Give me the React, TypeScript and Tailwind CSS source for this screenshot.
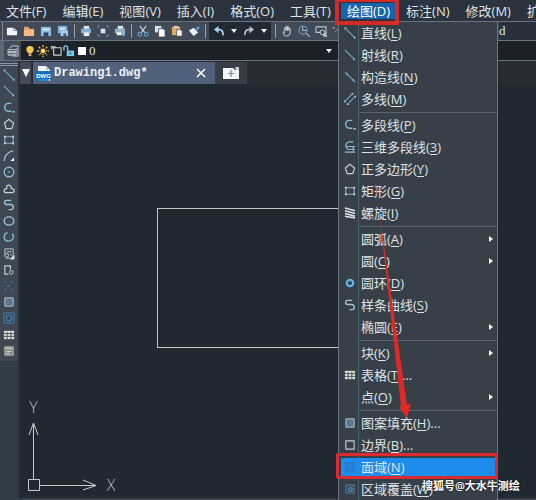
import type { ReactNode } from "react";

const MENUS: [string, string][] = [
  ["文件", "F"], ["编辑", "E"], ["视图", "V"], ["插入", "I"], ["格式", "O"],
  ["工具", "T"], ["绘图", "D"], ["标注", "N"], ["修改", "M"], ["扩展", "X"],
];

const line = "#78acc8";
const pale = "#c3d3da";

const shapes: Record<string, ReactNode> = {
  line: <path d="M2 2l9 9M1 1h1v1H1zM11 11h1v1h-1z" stroke={line} strokeWidth="1.2" />,
  ray: <path d="M1 1l10 10M10.500 10.500h1v1h-1z" stroke={line} strokeWidth="1.2" />,
  xline: <path d="M1 1l11 11M3 3h1v1H3zM9 9h1v1H9z" stroke={line} strokeWidth="1.1" />,
  mline: (
    <>
      <path d="M2 8l6-6M5 11l6-6" stroke={line} strokeWidth="1.1" />
      <path d="M0 8h2v2H0zM8 0h2v2H8zM3 11h2v2H3zM11 3h2v2h-2z" fill="#a5cbdd" />
    </>
  ),
  pline: <path d="M9 1.500H6C.500 1.500.500 10 6 10h3M10 10.500h3" stroke="#86bdd0" strokeWidth="1.5" />,
  poly3: <path d="M10 1H5C1 2 1 7 4 8M3 6h9M3 9h9M1 12h11M10 6v5" stroke="#86bdd0" strokeWidth="1.2" />,
  polygon: <path d="M6.500 1.500l5 4-2 6h-6l-2-6z" stroke={pale} strokeWidth="1.3" />,
  rect: (
    <>
      <path d="M2 3h9v7H2z" stroke="#9dbdc8" />
      <path d="M1 2h2v2H1zM10 2h2v2h-2zM1 9h2v2H1zM10 9h2v2h-2z" fill={pale} />
    </>
  ),
  helix: <path d="M1 1l11 3M1 4l11 3M1 7l11 3M1 10l11 2" stroke="#dce4e8" strokeWidth="1.7" />,
  donut: <circle cx="6.500" cy="6.500" r="3.500" stroke="#5eb7df" strokeWidth="2.400" />,
  spline: <path d="M9 1.500H4C1 1.500 1 6 4 6h4c4 0 4 5.500 1 5.500H6" stroke="#9cc7d5" strokeWidth="1.5" />,
  table: (
    <>
      <path d="M1 2h11v9H1z" fill="#dce3d8" />
      <path d="M1 5h11M1 8h11M4.500 3v8M8.500 3v8" stroke="#46534f" />
    </>
  ),
  hatch: (
    <>
      <path d="M2 2h9v9H2z" fill="#53718d" stroke="#bcc9d2" />
      <path d="M3 6l3-3M3 10l7-7M7 10l3-3" stroke="#7f9bb3" strokeWidth=".7" />
    </>
  ),
  boundary: <path d="M2 2h9v9H2z" stroke="#c5cdd2" strokeWidth="1.2" />,
  region: <path d="M2 2h9v9H2z" fill="#2484dc" stroke="#2a72b8" />,
  wipeout: (
    <>
      <path d="M2 2h9v9H2z" fill="#31506e" stroke="#7b95ab" strokeDasharray="2 1" />
      <circle cx="7" cy="7" r="2" stroke="#6ea0cc" />
    </>
  ),
  arc: (
    <>
      <path d="M1 12C2 6 5 2 11 1" stroke="#9dbdc8" strokeWidth="1.4" />
      <path d="M12 8v4H8z" fill="#fff" />
    </>
  ),
  circle: (
    <>
      <circle cx="6.500" cy="6.500" r="5.200" stroke="#8fb8cb" strokeWidth="1.500" />
      <circle cx="6.500" cy="6.500" r="1.200" fill="#5fa6cf" />
    </>
  ),
  cloud: <path d="M3 10.500C0 10 1 6 4 6 3 1 9 1 9 6c4 0 4 4 1 4.500z" stroke={pale} strokeWidth="1.4" />,
  ellipse: <ellipse cx="6.500" cy="6.500" rx="5.200" ry="4.500" stroke="#9cc7d5" strokeWidth="1.500" />,
  earc: <path d="M10 3c3 4 0 8-4 8C0 11 0 3 5 2" stroke="#79b3c2" strokeWidth="1.6" />,
  insert: (
    <>
      <path d="M2 7V1h9v7M4 4h5M8 11H3" stroke={pale} />
      <circle cx="4" cy="8" r="2" stroke={pale} />
      <path d="M12 8v4H8zM7 6l3 3" fill="#fff" stroke={pale} />
    </>
  ),
  block: (
    <>
      <path d="M6 11H2V2h6v4" stroke={pale} strokeWidth="1.2" />
      <circle cx="9" cy="9" r="2" stroke={pale} />
    </>
  ),
  point: <path d="M2 2h1v1H2zM9 2h1v1H9zM5 6h2v1H5zM2 10h1v1H2zM9 10h1v1H9z" stroke="#3d78a9" />,
  bregion: (
    <>
      <path d="M1 1h11v11H1z" stroke="#4185bd" />
      <circle cx="6.500" cy="6.500" r="3" stroke="#4185bd" strokeWidth="1.300" />
    </>
  ),
  mtext: (
    <>
      <path d="M2 2h9v9H2z" fill="#7e8a7f" stroke="#bdc7c0" />
      <path d="M3 4h7M4 7h5M4 9h3" stroke="#d5dcd4" />
    </>
  ),
  newdoc: (
    <>
      <path d="M1 3h7l4 3v5H1z" fill="#f3f6f6" />
      <path d="M8 3v3h4" stroke="#8796a0" />
    </>
  ),
  open: (
    <>
      <path d="M1 2h5l1 2h5v8H1z" fill="#e0a468" />
      <path d="M1 5h11v7H1z" fill="#f0bd84" />
    </>
  ),
  save: (
    <>
      <path d="M1 2h11v10H1z" fill="#8fb9df" />
      <path d="M4 8h5v4H4z" fill="#33475c" />
      <path d="M3 4h7v2H3z" fill="#d5e6f3" />
    </>
  ),
  saveas: (
    <>
      <path d="M1 1h10v8H1z" fill="#7faede" />
      <path d="M3 3h6v2H3z" fill="#e7f1f8" />
      <path d="M4 6h8v6H4z" fill="#a2cdeb" />
      <path d="M7 9h3v3H7z" fill="#406282" />
    </>
  ),
  print: (
    <>
      <path d="M4 1h6v4H4z" fill="#dbe9f1" />
      <path d="M1 4h11v5H1z" fill="#83b2d0" />
      <path d="M4 8h6v4H4z" fill="#e5eff4" />
    </>
  ),
  preview: (
    <>
      <path d="M1 3V1h2M10 1h2v2M1 10v2h2M10 12h2v-2" stroke="#8192a1" />
      <path d="M4 4h5v5H4z" fill="#dbe6ec" />
    </>
  ),
  publish: (
    <>
      <path d="M4 1h6v4H4z" fill="#dbe9f1" />
      <path d="M1 4h11v5H1z" fill="#8fb0c5" />
      <path d="M3 8h5v3H3z" fill="#fff" />
      <circle cx="10" cy="10" r="2" fill="#74b6df" />
    </>
  ),
  cut: (
    <>
      <path d="M3 1l6 8M10 1L4 9" stroke="#c8d4da" strokeWidth="1.2" />
      <circle cx="3" cy="10" r="2" stroke="#5e9dce" strokeWidth="1.3" />
      <circle cx="10" cy="10" r="2" stroke="#5e9dce" strokeWidth="1.3" />
    </>
  ),
  copy: (
    <>
      <path d="M1 1h7v7H1z" fill="#dce2e4" />
      <path d="M5 4h5l2 2v7H5z" fill="#fff" stroke="#4a5663" />
    </>
  ),
  paste: (
    <>
      <path d="M1 2h9v9H1z" fill="#e5a667" />
      <path d="M3 1h5v2H3z" fill="#d7d7cf" />
      <path d="M6 5h4l2 2v5H6z" fill="#fff" stroke="#6c6159" />
    </>
  ),
  match: (
    <>
      <path d="M8 4l3-3 2 2-3 3z" fill="#5a9fd0" />
      <path d="M1 6l5-3 5 5-5 4z" fill="#e9f2f7" />
    </>
  ),
  undo: (
    <>
      <path d="M6 1v8L1 5z" fill="#a9d0ee" />
      <path d="M5 5h2q4 0 4 6" stroke="#a9d0ee" strokeWidth="2" />
    </>
  ),
  redo: (
    <>
      <path d="M7 1v8l5-4z" fill="#b5c2cc" />
      <path d="M8 5H6q-4 0-4 6" stroke="#b5c2cc" strokeWidth="1.800" />
    </>
  ),
  pan: <path d="M4 7V3h1.500v3V1.500H7V6 2h1.500v4V4H10v4q0 4-4 4Q3 12 2 8l1-1 1 2" stroke="#cfd5d9" />,
  zoomrt: (
    <>
      <circle cx="5.500" cy="5.500" r="4.300" stroke="#6797bb" strokeWidth="1.300" />
      <path d="M5 2v4h4M9 9l4 4" stroke="#aebfcb" strokeWidth="1.2" />
    </>
  ),
  zoomwin: (
    <>
      <path d="M1 2h11v6M1 2v6h5" stroke="#b9c3cb" strokeWidth="1.2" />
      <circle cx="8" cy="8" r="2.500" stroke="#cfd8dd" />
      <path d="M10 10l3 3M12 8v4H9z" stroke="#dbe2e6" />
    </>
  ),
  zoomprev: <path d="M1 3h2M5 5h2M3 7h1" stroke="#c9946a" strokeWidth="1.5" />,
  layers: <path d="M3 4l2-3h7v2M1 5h9v2H1zM1 8h9v2H1zM1 11h9M10 4h2v8H6" stroke="#c5cfd5" />,
  bulb: (
    <>
      <path d="M6.500 1C1 1 2 7 5 9h3c4-3 3-8-1.500-8z" fill="#f8c94c" />
      <path d="M5 9h3v3H5z" fill="#d3b36d" />
    </>
  ),
  sun: (
    <>
      <path d="M6.500 0v13M0 6.500h13M2 2l9 9M11 2l-9 9" stroke="#efc449" strokeWidth="1.5" strokeDasharray="2 1" />
      <circle cx="6.500" cy="6.500" r="3" fill="#ffdc5f" stroke="#322f27" />
    </>
  ),
  viewport: <path d="M4 3h8v8H4zM1 2h5M2 1v4" stroke="#cbd1d4" strokeWidth="1.2" />,
  lock: (
    <>
      <path d="M1 6V3q0-2 2-2t2 2v3" stroke="#84cfed" strokeWidth="1.5" />
      <path d="M4 6h8v6H4z" fill="#79c8e8" />
      <path d="M8 8v2" stroke="#225270" strokeWidth="1.5" />
    </>
  ),
};

function Icon({ name }: { name: string }) {
  return (
    <svg viewBox="0 0 13 13" className="size-3 shrink-0" fill="none" aria-hidden="true">
      {shapes[name]}
    </svg>
  );
}

function Tool({ name }: { name: string }) {
  return (
    <button type="button" aria-label={name} className="flex h-4 w-3 shrink-0 items-center justify-center">
      <Icon name={name} />
    </button>
  );
}

const Caret = () => (
  <svg viewBox="0 0 6 4" className="h-1 w-1.5 shrink-0" aria-hidden="true">
    <path d="M0 0h6L3 4z" fill="#f0f3f5" />
  </svg>
);

const Divider = () => <span className="h-3.5 w-px shrink-0 bg-[#98a2aa]" />;

type Entry = { text: string; hot: string; icon?: string; sub?: boolean; dots?: boolean };

const GROUPS: Entry[][] = [
  [
    { text: "直线", hot: "L", icon: "line" },
    { text: "射线", hot: "R", icon: "ray" },
    { text: "构造线", hot: "N", icon: "xline" },
    { text: "多线", hot: "M", icon: "mline" },
  ],
  [
    { text: "多段线", hot: "P", icon: "pline" },
    { text: "三维多段线", hot: "3", icon: "poly3" },
    { text: "正多边形", hot: "Y", icon: "polygon" },
    { text: "矩形", hot: "G", icon: "rect" },
    { text: "螺旋", hot: "I", icon: "helix" },
  ],
  [
    { text: "圆弧", hot: "A", sub: true },
    { text: "圆", hot: "C", sub: true },
    { text: "圆环", hot: "D", icon: "donut" },
    { text: "样条曲线", hot: "S", icon: "spline" },
    { text: "椭圆", hot: "E", sub: true },
  ],
  [
    { text: "块", hot: "K", sub: true },
    { text: "表格", hot: "T", icon: "table", dots: true },
    { text: "点", hot: "O", sub: true },
  ],
  [
    { text: "图案填充", hot: "H", icon: "hatch", dots: true },
    { text: "边界", hot: "B", icon: "boundary", dots: true },
    { text: "面域", hot: "N", icon: "region" },
    { text: "区域覆盖", hot: "W", icon: "wipeout" },
  ],
];

function MenuRow({ item }: { item: Entry }) {
  const active = item.text === "面域";
  return (
    <button type="button" role="menuitem" className="relative flex h-[22px] w-full items-center text-left">
      {active && <span className="absolute inset-x-0.5 inset-y-0.5 bg-[#1e8ced]" />}
      <span className="relative flex w-[22px] shrink-0 justify-center">
        {item.icon && <Icon name={item.icon} />}
      </span>
      <span className="relative flex-1 whitespace-nowrap">
        {item.text}(<span className="underline underline-offset-2">{item.hot}</span>){item.dots && "..."}
      </span>
      {item.sub && (
        <svg viewBox="0 0 4 6" className="mr-1 h-1.5 w-1" aria-hidden="true">
          <path d="M0 0l4 3-4 3z" fill="#fff" />
        </svg>
      )}
    </button>
  );
}

function DrawMenu() {
  return (
    <div
      role="menu"
      aria-label="绘图"
      className="absolute top-[21px] left-[338px] h-[479px] w-[160px] overflow-hidden border-x border-t border-[#69757e] bg-[#374049]"
    >
      <span className="absolute inset-y-0 left-[19px] w-px bg-[#4c6069]" />
      {GROUPS.map((group, i) => (
        <div key={i}>
          {i > 0 && (
            <div className="flex h-1 items-center pl-5">
              <span className="h-px w-full bg-[#59656e]" />
            </div>
          )}
          {group.map((item) => (
            <MenuRow key={item.text} item={item} />
          ))}
        </div>
      ))}
    </div>
  );
}

const SIDE = [
  "line", "ray", "pline", "polygon", "rect", "arc", "circle", "cloud", "spline",
  "ellipse", "earc", "insert", "block", "point", "hatch", "bregion", "table", "mtext",
];

export default function App() {
  return (
    <div className="relative flex h-screen flex-col overflow-hidden bg-[#202932] font-['Open_Sans','Noto_Sans_CJK_SC',sans-serif] text-[13px] leading-[22px] text-[#dfe3e6]">
      <nav className="flex h-[21px] shrink-0 items-center gap-4 overflow-hidden bg-[#2b343e] pl-1.5">
        {MENUS.map(([label, key]) => (
          <button
            key={label}
            type="button"
            className={
              label === "绘图"
                ? "-mx-1.5 h-4 shrink-0 bg-[#1764ad] px-1.5 leading-4 whitespace-nowrap text-white"
                : "h-5 shrink-0 leading-5 whitespace-nowrap"
            }
          >
            {label}({key})
          </button>
        ))}
      </nav>

      <div className="flex h-5 shrink-0 items-center border-y border-[#687580] bg-[#404b57]">
        <span className="mr-[3px] ml-0.5 h-full w-px bg-[#7c8791]" />
        <div className="flex items-center gap-[5px]">
          {["newdoc", "open", "save", "saveas"].map((n) => <Tool key={n} name={n} />)}
          <Divider />
          {["print", "preview", "publish"].map((n) => <Tool key={n} name={n} />)}
          <Divider />
          {["cut", "copy", "paste", "match"].map((n) => <Tool key={n} name={n} />)}
          <Divider />
        </div>
        <div className="ml-[3px] flex h-full w-[62px] items-center justify-between bg-[#202831] px-1">
          <Tool name="undo" /><Caret /><Tool name="redo" /><Caret />
        </div>
        <div className="ml-1 flex items-center gap-[5px]">
          <Divider />
          <Tool name="pan" /><Tool name="zoomrt" /><Tool name="zoomwin" /><Tool name="zoomprev" />
        </div>
        <select
          aria-label="文字样式"
          className="ml-auto h-full w-[37px] appearance-none bg-[#28313b] font-['Liberation_Serif',serif] text-[13px] leading-4"
        >
          <option>d</option>
        </select>
      </div>

      <div className="flex h-5 shrink-0 items-center border-b border-[#687580] bg-[#1c2129]">
        <div className="flex h-full w-[21px] shrink-0 items-center justify-center border-l-4 border-[#5c6873] bg-[#404b57]">
          <Icon name="layers" />
        </div>
        <div className="ml-[3px] flex items-center gap-px">
          <Icon name="bulb" /><Icon name="sun" /><Icon name="viewport" /><Icon name="lock" />
        </div>
        <span className="ml-[3px] size-2 bg-white" />
        <select
          aria-label="图层"
          className="ml-[3px] h-4 w-[237px] appearance-none bg-transparent font-['Liberation_Serif',serif] text-[13px] leading-4"
        >
          <option>0</option>
        </select>
        <Caret />
      </div>

      <div className="flex min-h-0 flex-1">
        <aside className="flex w-5 shrink-0 flex-col border-r-2 border-[#28313b] bg-[#333d47]">
          <div className="flex h-[300px] flex-col items-center bg-[#3e4853] pb-0.5">
            <span className="mt-0.5 mb-px h-[3px] w-full shrink-0 border-y border-[#8a959e]" />
            {SIDE.map((n) => (
              <button key={n} type="button" aria-label={n} className="flex min-h-0 w-full flex-1 items-center justify-center">
                <Icon name={n} />
              </button>
            ))}
          </div>
        </aside>

        <main className="flex min-w-0 flex-1 flex-col">
          <div className="flex h-[23px] shrink-0 items-stretch bg-[#292b34] pt-px">
            <button type="button" aria-label="标签列表" className="mr-0.5 flex w-[11px] items-center justify-center bg-[#434c56]">
              <svg viewBox="0 0 8 8" className="size-2" aria-hidden="true">
                <path d="M0 0h8L4 8z" fill="#fff" />
              </svg>
            </button>
            <div className="flex w-[182px] items-center bg-[#51617c] pl-0.5">
              <svg viewBox="0 0 17 17" className="size-[17px] shrink-0" role="img" aria-label="DWG">
                <path d="M3 1h8l4 4v11H3z" fill="#f5f8fa" />
                <path d="M11 1v4h4" fill="#b8c9d8" />
                <path d="M1 6h15v8H1z" fill="#1470b8" />
                <path d="M3 15h11" stroke="#1b8bd4" strokeWidth="2" />
                <text x="8.500" y="12.500" textAnchor="middle" fontSize="6" fontWeight="700" fontFamily="Liberation Sans" fill="#fff">DWG</text>
              </svg>
              <span className="ml-0.5 flex-1 font-['Liberation_Mono',monospace] text-xs font-bold text-[#eef1f4]">
                Drawing1.dwg*
              </span>
              <button type="button" aria-label="关闭" className="mr-2 flex size-3 items-center justify-center">
                <svg viewBox="0 0 10 10" className="size-2.5" fill="none" aria-hidden="true">
                  <path d="M1 1l8 8M9 1L1 9" stroke="#fff" strokeWidth="1.5" />
                </svg>
              </button>
            </div>
            <button type="button" aria-label="新建标签" className="flex w-8 items-center justify-center bg-[#383d47]">
              <svg viewBox="0 0 16 12" className="h-3 w-4" aria-hidden="true">
                <path d="M0 1h10l2 2h4v9H0z" fill="#f2f5f6" />
                <path d="M12 0h4v3h-3z" fill="#c3ccd2" />
                <path d="M8 3v7M5 6.500h6" stroke="#7d8b93" strokeWidth="1.200" />
              </svg>
            </button>
          </div>

          <div className="relative min-h-0 flex-1 overflow-hidden border-b-2 border-[#34404d]">
            <div className="absolute top-[124px] left-[137px] h-[140px] w-[320px] border border-[#c2c7cb]" />
            <svg
              viewBox="0 0 110 100"
              className="absolute bottom-0 left-0 h-[100px] w-[110px]"
              fill="none"
              stroke="#c6cacd"
              aria-label="坐标系"
            >
              <path d="M8.500 81.500h11v11h-11zM13.500 81V26M20 87.500h55" />
              <path d="M9 37l4.500-12L18 37M63 82l13 5.500L63 92" />
              <text x="13.500" y="15" textAnchor="middle" fontSize="16" fontFamily="Open Sans" fontWeight="300" fill="#b5babf" stroke="none">Y</text>
              <text x="91" y="93" textAnchor="middle" fontSize="16" fontFamily="Open Sans" fontWeight="300" fill="#b5babf" stroke="none">X</text>
            </svg>
          </div>
        </main>
      </div>

      <DrawMenu />

      <svg viewBox="370 180 50 245" className="pointer-events-none absolute top-[180px] left-[370px] h-[245px] w-[50px]" aria-hidden="true">
        <path d="M375 183l32 222 4-1-4 14-8-11 2-1-25-222z" fill="#e02926" />
      </svg>
      <div className="pointer-events-none absolute -top-0.5 left-[335px] h-[27px] w-[64px] border-4 border-[#d12a2a]" />
      <div className="pointer-events-none absolute top-[453px] left-[336px] h-[26px] w-[162px] rounded-xs border-3 border-[#d92b31]" />
      <p className="absolute top-[475px] left-[422px] text-[11px] font-semibold whitespace-nowrap text-white [text-shadow:0_0_2px_#000]">
        搜狐号@大水牛测绘
      </p>
    </div>
  );
}
